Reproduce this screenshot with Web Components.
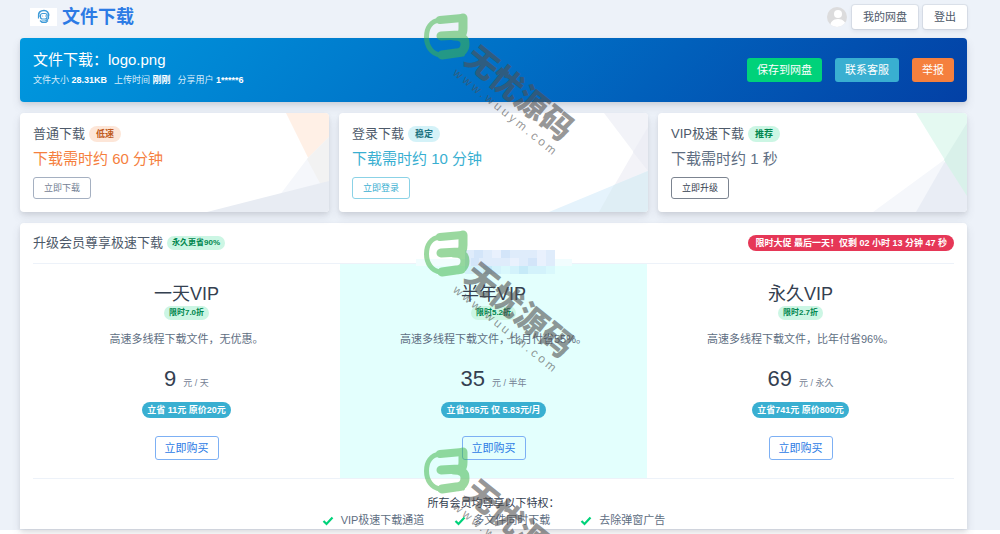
<!DOCTYPE html>
<html lang="zh-CN">
<head>
<meta charset="utf-8">
<meta name="viewport" content="width=device-width, initial-scale=1">
<title>文件下载</title>
<style>
  html {
    background: #fff;
    overflow-x: hidden;
  }

  body {
    margin: 0;
    font-family: "Liberation Sans", "Noto Sans CJK SC", sans-serif;
    font-size: 11px;
    color: #5e6e82;
    position: relative;
    height: 100vh;
    overflow: hidden;
  }
</style>
</head>
<body>
<page-shell>
  <site-header>文件下载</site-header>
  <file-banner name="logo.png" size="28.31KB" time="刚刚" user="1*****6"></file-banner>
  <card-row>
    <speed-card kind="slow" name="普通下载" tag="低速" action="立即下载">下载需时约 60 分钟</speed-card>
    <speed-card kind="login" name="登录下载" tag="稳定" action="立即登录">下载需时约 10 分钟</speed-card>
    <speed-card kind="vip" name="VIP极速下载" tag="推荐" action="立即升级">下载需时约 1 秒</speed-card>
  </card-row>
  <vip-panel>
    <vip-plan name="一天VIP" tag="限时7.0折" price="9" unit="元 / 天" save="立省 11元 原价20元">高速多线程下载文件，无优惠。</vip-plan>
    <vip-plan active name="半年VIP" tag="限时5.2折" price="35" unit="元 / 半年" save="立省165元 仅 5.83元/月">高速多线程下载文件，比月付省55%。</vip-plan>
    <vip-plan name="永久VIP" tag="限时2.7折" price="69" unit="元 / 永久" save="立省741元 原价800元">高速多线程下载文件，比年付省96%。</vip-plan>
    <check-item slot="perk">VIP极速下载通道</check-item>
    <check-item slot="perk">多文件同时下载</check-item>
    <check-item slot="perk">去除弹窗广告</check-item>
  </vip-panel>
</page-shell>
<site-watermark></site-watermark>

<script>
class BaseElement extends HTMLElement {
  connectedCallback() {
    if (this.shadowRoot) return;
    this.attachShadow({ mode: "open" });
    this.shadowRoot.innerHTML = this.render();
  }

  attr(name) {
    return this.getAttribute(name) || "";
  }
}

class PageShell extends BaseElement {
  render() {
    return `
      <style>
        :host {
          display: block;
          padding: 0 33px 1px 20px;
          background: #edf2f9;
        }
      </style>
      <slot></slot>
    `;
  }
}

class UiBadge extends BaseElement {
  render() {
    return `
      <style>
        :host {
          display: inline-block;
          padding: 0 7px;
          border-radius: 8px;
          font-size: 9px;
          line-height: 16px;
          font-weight: bold;
          white-space: nowrap;
          background: #ccf6e4;
          color: #00864e;
        }
        :host([small]) { padding: 0 5px; font-size: 8px; line-height: 14px; }
        :host([tone="orange"]) { background: #fde6d8; color: #c05a20; }
        :host([tone="cyan"]) { background: #d4f2f8; color: #1c7381; }
        :host([tone="info"]) { background: #39afd1; color: #fff; padding: 0 5px; }
        :host([tone="red"]) { background: #e63757; color: #fff; }
      </style>
      <slot></slot>
    `;
  }
}

class UiButton extends BaseElement {
  render() {
    return `
      <style>
        :host { display: inline-block; }
        button {
          display: block;
          height: 24px;
          padding: 0 9px;
          border: 1px solid transparent;
          border-radius: 3px;
          font: inherit;
          font-size: 11px;
          line-height: 16px;
          white-space: nowrap;
          background: transparent;
          color: #fff;
          cursor: pointer;
        }
        :host([small]) button { height: 22px; padding: 0 10px; font-size: 9px; }
        :host([tone="plain"]) button {
          padding: 0 10px;
          background: #fff;
          color: #4d5969;
          box-shadow: 0 0 0 1px rgba(43, 45, 80, .08), 0 2px 4px rgba(43, 45, 80, .1);
        }
        :host([tone="green"]) button { background: #00d27a; }
        :host([tone="cyan"]) button { background: #39afd1; }
        :host([tone="orange"]) button { background: #f5803e; }
        :host([tone="line-grey"]) button { border-color: #a5b0c1; color: #748194; }
        :host([tone="line-cyan"]) button { border-color: #8bd2e6; color: #39afd1; }
        :host([tone="line-dark"]) button { border-color: #7c8490; color: #344050; }
        :host([tone="line-blue"]) button { border-color: #7db0f4; color: #2c7be5; }
      </style>
      <button type="button"><slot></slot></button>
    `;
  }
}

class SiteHeader extends BaseElement {
  render() {
    return `
      <style>
        :host {
          display: flex;
          align-items: center;
          justify-content: space-between;
          padding: 5px 0 9px 10px;
        }
        a {
          display: flex;
          align-items: center;
          gap: 5px;
          color: #2c7be5;
          font-size: 18px;
          font-weight: bold;
          line-height: 24px;
          text-decoration: none;
        }
        .logo { display: block; background: #fff; }
        .user { display: flex; align-items: center; gap: 5px; }
      </style>
      <a href="#">
        <svg class="logo" width="27" height="18" viewBox="0 0 27 18" fill="none" stroke="#3f9bd8">
          <path d="M9 9c-1.500-5 2-6.500 5-6.500s5 2 4.500 5.500" stroke-width="1.500"/>
          <rect x="10.500" y="5.500" width="6.500" height="5.500" rx="2" stroke-width="1.200"/>
          <path d="M8.500 7.500v3M18.500 6.500v4l-3 2.500h-4M10 12.500l2 2h4l2-2" stroke-width="1.200"/>
          <path d="M12.500 8h.6M15 8h.6" stroke="#1c6fae"/>
        </svg>
        <slot></slot>
      </a>
      <div class="user">
        <svg width="20" height="20" viewBox="0 0 20 20">
          <defs><clipPath id="c"><circle cx="10" cy="10" r="10"/></clipPath></defs>
          <g clip-path="url(#c)">
            <path fill="#dcdcdd" d="M0 0h20v20H0z"/>
            <circle cx="11" cy="7" r="4" fill="#fff"/>
            <path d="M3 20c0-5 3-8 8-8s8 3 8 8z" fill="#fff"/>
          </g>
        </svg>
        <ui-button tone="plain">我的网盘</ui-button>
        <ui-button tone="plain">登出</ui-button>
      </div>
    `;
  }
}

class FileBanner extends BaseElement {
  render() {
    return `
      <style>
        :host {
          display: flex;
          align-items: center;
          justify-content: space-between;
          padding: 13px;
          border-radius: 4px;
          color: #fff;
          background: linear-gradient(-45deg, #0340a5, #0070c6 50%, #0099df);
          box-shadow: 0 5px 10px rgba(65, 69, 88, .12), 0 2px 4px rgba(0, 0, 0, .07);
        }
        h1 {
          margin: 0 0 2px;
          font-size: 15px;
          line-height: 18px;
          font-weight: normal;
        }
        .meta {
          display: flex;
          gap: 7px;
          font-size: 9px;
          line-height: 18px;
          color: #d8ecfa;
        }
        b { color: #fff; }
        .actions { display: flex; gap: 13px; }
      </style>
      <div>
        <h1>文件下载：${this.attr("name")}</h1>
        <div class="meta">
          <span>文件大小 <b>${this.attr("size")}</b></span>
          <span>上传时间 <b>${this.attr("time")}</b></span>
          <span>分享用户 <b>${this.attr("user")}</b></span>
        </div>
      </div>
      <div class="actions">
        <ui-button tone="green">保存到网盘</ui-button>
        <ui-button tone="cyan">联系客服</ui-button>
        <ui-button tone="orange">举报</ui-button>
      </div>
    `;
  }
}

class CardRow extends BaseElement {
  render() {
    return `
      <style>
        :host {
          display: grid;
          grid-template-columns: repeat(3, 1fr);
          gap: 10px;
          margin: 11px 0;
        }
      </style>
      <slot></slot>
    `;
  }
}

const cardKinds = {
  slow: {
    color: "#f5803e",
    tag: "orange",
    button: "line-grey",
    // corner triangles, drawn from the back to the front
    art: `
      <path fill="#fff0e6" d="M87 0h43v87z"/>
      <path fill="#f5f7fb" d="M130 24 108 46 68 99h62z"/>
      <path fill="#f2f2f2" d="M130 24 108 46l22 41z"/>
      <path fill="#e8ecf3" d="M8 99l122-31v31z"/>`
  },
  login: {
    color: "#39afd1",
    tag: "cyan",
    button: "line-cyan",
    art: `
      <path fill="#f2f3f8" d="M86 0h44v58z"/>
      <path fill="#f3f3f8" d="M130 14 81 99h49z"/>
      <path fill="#edeef5" d="M130 14 115 39l15 19z"/>
      <path fill="#e5f3fc" d="M31 99l99-41v41z"/>
      <path fill="#dfeef5" d="M96 72l34-14v41H81z"/>`
  },
  vip: {
    color: "#5e6e82",
    tag: "green",
    button: "line-dark",
    art: `
      <path fill="#f5f7fb" d="M36 99l71-52v52z"/>
      <path fill="#e4f9f1" d="M79 0h51v83z"/>
      <path fill="#e9edf5" d="M130 10 79 99h51z"/>
      <path fill="#d9f1ea" d="M130 10 107 47l23 36z"/>`
  }
};

class SpeedCard extends BaseElement {
  render() {
    const kind = cardKinds[this.attr("kind")];
    return `
      <style>
        :host {
          display: block;
          position: relative;
          padding: 13px;
          border-radius: 4px;
          overflow: hidden;
          background: #fff;
          box-shadow: 0 5px 10px rgba(65, 69, 88, .12), 0 2px 4px rgba(0, 0, 0, .07);
        }
        .art {
          position: absolute;
          right: 0;
          bottom: 0;
          height: 100%;
        }
        .body { position: relative; }
        h2 {
          display: flex;
          align-items: center;
          gap: 4px;
          margin: 0 0 7px;
          font-size: 13px;
          line-height: 16px;
          font-weight: normal;
          color: #4d5969;
        }
        p {
          margin: 0 0 8px;
          font-size: 15px;
          line-height: 20px;
          color: ${kind.color};
        }
        ui-button { display: block; }
      </style>
      <svg class="art" viewBox="0 0 130 99">${kind.art}</svg>
      <div class="body">
        <h2>${this.attr("name")} <ui-badge tone="${kind.tag}">${this.attr("tag")}</ui-badge></h2>
        <p><slot></slot></p>
        <ui-button small tone="${kind.button}">${this.attr("action")}</ui-button>
      </div>
    `;
  }
}

class VipPanel extends BaseElement {
  render() {
    return `
      <style>
        :host {
          display: block;
          padding: 0 13px;
          border-radius: 4px 4px 0 0;
          background: #fff;
          box-shadow: 0 5px 10px rgba(65, 69, 88, .12), 0 2px 4px rgba(0, 0, 0, .07);
        }
        header {
          display: flex;
          align-items: center;
          justify-content: space-between;
          height: 40px;
          border-bottom: 1px solid #edf2f9;
        }
        h2 {
          display: flex;
          align-items: center;
          gap: 4px;
          margin: 0;
          font-size: 13px;
          line-height: 16px;
          font-weight: normal;
          color: #4d5969;
        }
        .plans {
          display: grid;
          grid-template-columns: repeat(3, 1fr);
          border-bottom: 1px solid #edf2f9;
        }
        footer {
          padding-top: 16px;
          text-align: center;
          line-height: 17px;
          color: #344050;
        }
        .perks {
          display: flex;
          justify-content: center;
          gap: 30px;
        }
      </style>
      <header>
        <h2>升级会员尊享极速下载 <ui-badge small>永久更省90%</ui-badge></h2>
        <ui-badge tone="red">限时大促 最后一天！仅剩 02 小时 13 分钟 47 秒</ui-badge>
      </header>
      <div class="plans"><slot></slot></div>
      <footer>
        <div>所有会员均尊享以下特权：</div>
        <div class="perks"><slot name="perk"></slot></div>
      </footer>
    `;
  }
}

class VipPlan extends BaseElement {
  render() {
    return `
      <style>
        :host {
          display: flex;
          flex-direction: column;
          align-items: center;
          padding: 18px 0;
        }
        :host([active]) { background: #e3fffd; }
        h3 {
          margin: 0;
          font-size: 18px;
          line-height: 24px;
          font-weight: normal;
          color: #344050;
        }
        p { margin: 11px 0 19px; line-height: 16px; }
        .price {
          display: flex;
          align-items: baseline;
          gap: 7px;
          margin-bottom: 6px;
          font-size: 22px;
          line-height: 26px;
          color: #344050;
        }
        small { font-size: 9px; color: #748194; }
        ui-button { margin-top: 18px; }
      </style>
      <h3>${this.attr("name")}</h3>
      <ui-badge small>${this.attr("tag")}</ui-badge>
      <p><slot></slot></p>
      <div class="price">${this.attr("price")} <small>${this.attr("unit")}</small></div>
      <ui-badge tone="info">${this.attr("save")}</ui-badge>
      <ui-button tone="line-blue">立即购买</ui-button>
    `;
  }
}

class CheckItem extends BaseElement {
  render() {
    return `
      <style>
        :host {
          display: flex;
          align-items: center;
          gap: 7px;
          color: #5e6e82;
        }
      </style>
      <svg width="12" height="10" viewBox="0 0 12 10">
        <path d="M1.500 5 4.500 8 10.500 1.500" fill="none" stroke="#00d27a" stroke-width="2.200"/>
      </svg>
      <span><slot></slot></span>
    `;
  }
}

class SiteWatermark extends BaseElement {
  render() {
    const mark = `
      <div class="mark">
        <svg width="46" height="48" viewBox="0 0 46 48" fill="none" stroke="#42b74b" stroke-linecap="round" stroke-linejoin="round">
          <path d="M38 5 16 7C7 8 2.500 15 2.500 24s5 17 14 18l22-1" stroke-width="5"/>
          <path d="M16 7 38 5" stroke-width="8"/>
          <path d="M39 5v10c0 4-1 7-4 7l-18 1" stroke-width="9"/>
          <path d="M30 23c8 0 11 3 11 8s-3 9-9 9l-14 2" stroke-width="9"/>
        </svg>
        <div class="words">
          <div class="name">无忧源码</div>
          <div class="url">www.wuuym.com</div>
        </div>
      </div>`;
    return `
      <style>
        :host {
          position: absolute;
          top: 13px;
          left: calc(50% - 76px);
          display: flex;
          flex-direction: column;
          pointer-events: none;
        }
        .mark { position: relative; height: 217px; }
        .mark svg { display: block; opacity: .53; }
        .words {
          position: absolute;
          top: 27px;
          left: 56px;
          transform: rotate(39deg);
          transform-origin: 0 0;
          color: rgba(80, 80, 80, .6);
          white-space: nowrap;
        }
        .name { font-size: 32px; line-height: 34px; font-weight: 900; }
        .url { font-size: 12px; line-height: 12px; letter-spacing: 3px; }
        .mosaic {
          position: absolute;
          top: 237px;
          left: -8px;
        }
      </style>
      <svg class="mosaic" width="156" height="24" viewBox="0 0 156 24">
        <path fill="#f1fdfe" d="M0 9h156v7H0z"/>
        <path fill="#dfecfb" d="M49 0h90v16H49z"/>
        <path fill="#d3e5f9" d="M58 0h9v8h-9zM85 0h9v8h-9zM112 8h9v8h-9zM55 8h8v8h-8z"/>
        <path fill="#e9f1fd" d="M76 0h9v8h-9zM121 0h9v16h-9zM94 8h9v8h-9z"/>
        <path fill="#d3f2fb" d="M49 16h90v8H49z"/>
        <path fill="#c6eaf8" d="M67 16h9v8h-9zM103 16h9v8h-9z"/>
        <path fill="#d9f8fc" d="M85 16h9v8h-9zM130 16h9v8h-9z"/>
      </svg>
      ${mark}${mark}${mark}
    `;
  }
}

customElements.define("page-shell", PageShell);
customElements.define("ui-badge", UiBadge);
customElements.define("ui-button", UiButton);
customElements.define("site-header", SiteHeader);
customElements.define("file-banner", FileBanner);
customElements.define("card-row", CardRow);
customElements.define("speed-card", SpeedCard);
customElements.define("vip-panel", VipPanel);
customElements.define("vip-plan", VipPlan);
customElements.define("check-item", CheckItem);
customElements.define("site-watermark", SiteWatermark);
</script>
</body>
</html>
